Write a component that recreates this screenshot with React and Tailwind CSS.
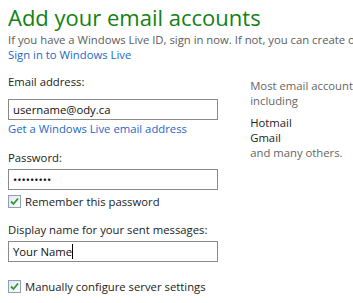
const Check = () => (
  <span className="w-[13px] h-[13px] border border-[#8e9fb5] bg-gradient-to-br from-[#e4e8ee] to-[#fbfcfd] flex items-center justify-center shrink-0">
    <svg width="9" height="9" viewBox="0 0 9 9">
      <path d="M1 4.5 L3.5 7 L8 1.5" fill="none" stroke="#2f9a2f" strokeWidth="1.8" />
    </svg>
  </span>
);

const Field = ({ value, cursor }) => (
  <div className="w-[210px] h-[21px] border border-[#8a8a8a] bg-white flex items-center px-[4px] text-[#111]">
    <span>{value}</span>
    {cursor && <span className="w-px h-[15px] bg-black" />}
  </div>
);

export default function App() {
  return (
    <div
      className="w-[353px] h-[303px] bg-white overflow-hidden text-[11.3px] leading-[15px] text-[#222] pl-[8px]"
      style={{ fontFamily: '"Open Sans", "Noto Sans", sans-serif' }}
    >
      <h1 className="text-[22px] leading-[30px] pt-[2px] text-[#128212] whitespace-nowrap">
        Add your email accounts
      </h1>
      <p className="text-[#5c5c5c] whitespace-nowrap">
        If you have a Windows Live ID, sign in now. If not, you can create o
      </p>
      <p className="text-[#2468c8]">Sign in to Windows Live</p>

      <div className="flex mt-[12px]">
        <div className="w-[243px] flex flex-col">
          <div>Email address:</div>
          <div className="mt-[10px]">
            <Field value="username@ody.ca" />
          </div>
          <div className="text-[#2468c8] mt-[1px]">Get a Windows Live email address</div>

          <div className="mt-[14px]">Password:</div>
          <div className="mt-[4px]">
            <Field value="•••••••••" />
          </div>
          <div className="flex items-center gap-[4px] mt-[4px]">
            <Check />
            <span>Remember this password</span>
          </div>

          <div className="mt-[13px]">Display name for your sent messages:</div>
          <div className="mt-[4px]">
            <Field value="Your Name" cursor />
          </div>

          <div className="flex items-center gap-[4px] mt-[17px]">
            <Check />
            <span>Manually configure server settings</span>
          </div>
        </div>

        <div className="flex flex-col pt-[4px] text-[#666] whitespace-nowrap">
          <div>Most email account</div>
          <div>including</div>
          <div className="mt-[7px] text-[#222]">Hotmail</div>
          <div className="text-[#222]">Gmail</div>
          <div>and many others.</div>
        </div>
      </div>
    </div>
  );
}
